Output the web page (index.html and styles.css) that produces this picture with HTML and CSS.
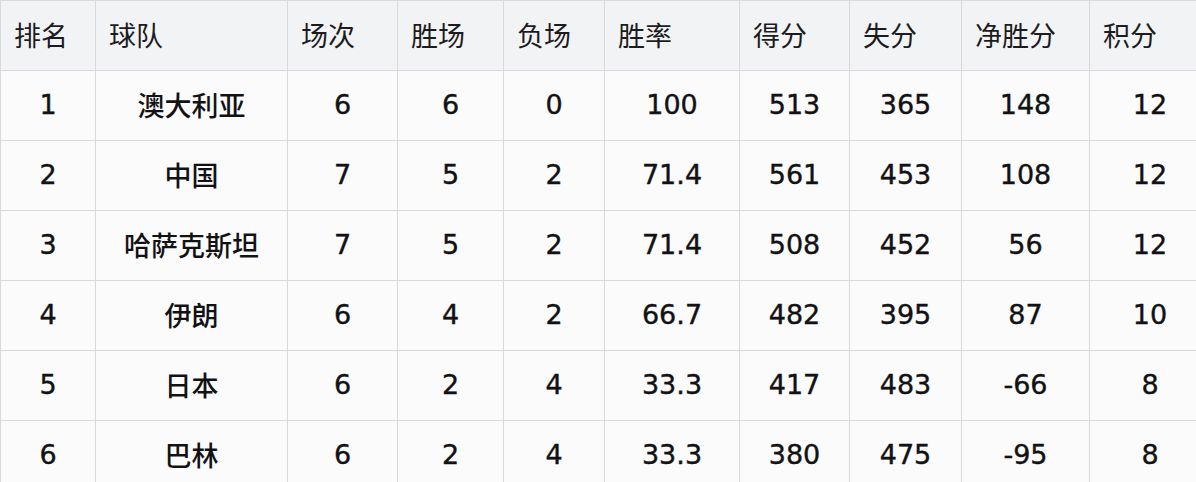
FILE: index.html
```html
<!DOCTYPE html>
<html lang="zh">
<head>
<meta charset="utf-8">
<link rel="stylesheet" href="styles.css">
</head>
<body>
<table class="standings">
  <colgroup>
    <col class="c1"><col class="c2"><col class="c3"><col class="c4"><col class="c5">
    <col class="c6"><col class="c7"><col class="c8"><col class="c9"><col class="c10">
  </colgroup>
  <thead>
    <tr><th>排名</th><th>球队</th><th>场次</th><th>胜场</th><th>负场</th><th>胜率</th><th>得分</th><th>失分</th><th>净胜分</th><th>积分</th></tr>
  </thead>
  <tbody>
    <tr><td>1</td><td class="team">澳大利亚</td><td>6</td><td>6</td><td>0</td><td>100</td><td>513</td><td>365</td><td>148</td><td class="pts">12</td></tr>
    <tr><td>2</td><td class="team">中国</td><td>7</td><td>5</td><td>2</td><td>71.4</td><td>561</td><td>453</td><td>108</td><td class="pts">12</td></tr>
    <tr><td>3</td><td class="team">哈萨克斯坦</td><td>7</td><td>5</td><td>2</td><td>71.4</td><td>508</td><td>452</td><td>56</td><td class="pts">12</td></tr>
    <tr><td>4</td><td class="team">伊朗</td><td>6</td><td>4</td><td>2</td><td>66.7</td><td>482</td><td>395</td><td>87</td><td class="pts">10</td></tr>
    <tr><td>5</td><td class="team">日本</td><td>6</td><td>2</td><td>4</td><td>33.3</td><td>417</td><td>483</td><td>-66</td><td class="pts">8</td></tr>
    <tr><td>6</td><td class="team">巴林</td><td>6</td><td>2</td><td>4</td><td>33.3</td><td>380</td><td>475</td><td>-95</td><td class="pts">8</td></tr>
  </tbody>
</table>
</body>
</html>
```
FILE: styles.css
```css
html, body {
  margin: 0;
  padding: 0;
  background: #fbfbfc;
  overflow: hidden;
}
.standings {
  border-collapse: collapse;
  table-layout: fixed;
  width: 1196px;
  font-family: "Noto Sans", "Noto Sans CJK SC", sans-serif;
  font-size: 27px;
  color: #121214;
  background: #fbfbfc;
}
.c1 { width: 95px; }
.c2 { width: 192px; }
.c3 { width: 110px; }
.c4 { width: 106px; }
.c5 { width: 101px; }
.c6 { width: 135px; }
.c7 { width: 110px; }
.c8 { width: 112px; }
.c9 { width: 128px; }
.c10 { width: 107px; }
.standings th,
.standings td {
  border: 1px solid #d9d9dd;
  height: 70px;
  padding: 0;
  box-sizing: border-box;
  white-space: nowrap;
}
.standings th {
  background: #f2f3f5;
  font-family: "Noto Sans CJK SC", sans-serif;
  font-weight: 400;
  color: #1c1c1e;
  text-align: left;
  padding-left: 13px;
  padding-bottom: 3px;
}
.standings td {
  font-family: "DejaVu Sans", "Noto Sans CJK SC", sans-serif;
  text-align: center;
  padding-bottom: 2px;
  -webkit-text-stroke: 0.4px #121214;
}
.standings td.team {
  font-family: "Noto Sans CJK SC", sans-serif;
  font-weight: 500;
  -webkit-text-stroke: 0;
}
.standings td.pts {
  padding-left: 14px;
}
```
